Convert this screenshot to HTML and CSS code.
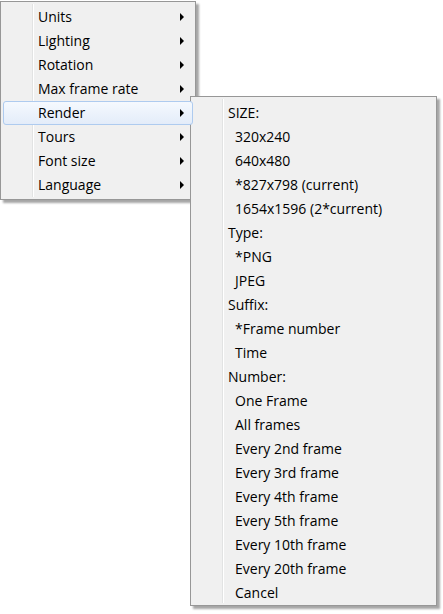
FILE: index.html
```html
<!DOCTYPE html>
<html>
<head>
<meta charset="utf-8">
<link rel="stylesheet" href="styles.css">
</head>
<body>
<div class="menu main">
  <div class="item"><span class="label">Units</span><span class="arrow"></span></div>
  <div class="item"><span class="label">Lighting</span><span class="arrow"></span></div>
  <div class="item"><span class="label">Rotation</span><span class="arrow"></span></div>
  <div class="item"><span class="label">Max frame rate</span><span class="arrow"></span></div>
  <div class="item active"><span class="label">Render</span><span class="arrow"></span></div>
  <div class="item"><span class="label">Tours</span><span class="arrow"></span></div>
  <div class="item"><span class="label">Font size</span><span class="arrow"></span></div>
  <div class="item"><span class="label">Language</span><span class="arrow"></span></div>
</div>
<div class="menu sub">
  <div class="item"><span class="label">SIZE:</span></div>
  <div class="item ind"><span class="label">320x240</span></div>
  <div class="item ind"><span class="label">640x480</span></div>
  <div class="item ind"><span class="label">*827x798 (current)</span></div>
  <div class="item ind"><span class="label">1654x1596 (2*current)</span></div>
  <div class="item"><span class="label">Type:</span></div>
  <div class="item ind"><span class="label">*PNG</span></div>
  <div class="item ind"><span class="label">JPEG</span></div>
  <div class="item"><span class="label">Suffix:</span></div>
  <div class="item ind"><span class="label">*Frame number</span></div>
  <div class="item ind"><span class="label">Time</span></div>
  <div class="item"><span class="label">Number:</span></div>
  <div class="item ind"><span class="label">One Frame</span></div>
  <div class="item ind"><span class="label">All frames</span></div>
  <div class="item ind"><span class="label">Every 2nd frame</span></div>
  <div class="item ind"><span class="label">Every 3rd frame</span></div>
  <div class="item ind"><span class="label">Every 4th frame</span></div>
  <div class="item ind"><span class="label">Every 5th frame</span></div>
  <div class="item ind"><span class="label">Every 10th frame</span></div>
  <div class="item ind"><span class="label">Every 20th frame</span></div>
  <div class="item ind"><span class="label">Cancel</span></div>
</div>
</body>
</html>
```
FILE: styles.css
```css
html, body {
  margin: 0;
  padding: 0;
  background: #ffffff;
}
body {
  position: relative;
  width: 443px;
  height: 614px;
  overflow: hidden;
  font-family: "Open Sans", "Noto Sans", sans-serif;
  font-size: 14px;
  color: #000;
}
.menu {
  position: absolute;
  box-sizing: border-box;
  background: #f0f0f0;
  border: 1px solid #979797;
  padding: 3px 2px 2px 2px;
  display: flex;
  flex-direction: column;
  box-shadow: 3px 3px 2px rgba(0, 0, 0, 0.35);
}
.menu::before {
  content: "";
  position: absolute;
  top: 2px;
  bottom: 2px;
  left: 31px;
  width: 1px;
  background: #e2e3e3;
  border-right: 1px solid #ffffff;
}
.main {
  left: 0;
  top: 1px;
  width: 196px;
  height: 199px;
}
.sub {
  left: 190px;
  top: 96px;
  width: 247px;
  height: 510px;
  padding-top: 4px;
  padding-bottom: 0;
}
.item {
  position: relative;
  z-index: 1;
  height: 24px;
  flex: none;
  box-sizing: border-box;
  display: flex;
  align-items: center;
  padding-left: 34px;
  border: 1px solid transparent;
  border-radius: 3px;
}
.label {
  flex: 1;
  white-space: nowrap;
  line-height: 17px;
  padding-bottom: 1px;
}
.sub .item {
  padding-left: 34px;
}
.sub .ind {
  padding-left: 41px;
}
.arrow {
  width: 0;
  height: 0;
  border-left: 4px solid #000;
  border-top: 4px solid transparent;
  border-bottom: 4px solid transparent;
  margin-right: 8px;
}
.active {
  border-color: #aecbef;
  background: linear-gradient(#f5f9fe, #e3ecf9);
}
```
